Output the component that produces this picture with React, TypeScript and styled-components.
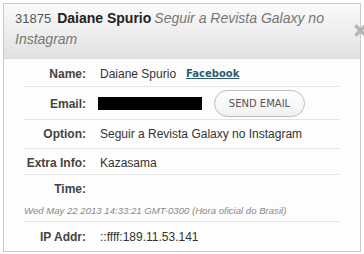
import React from 'react'
import styled, { createGlobalStyle } from 'styled-components'

const GlobalStyle = createGlobalStyle`
  html, body {
    margin: 0;
    padding: 0;
    background: #ffffff;
  }
  body {
    font-family: "Liberation Sans", Arial, sans-serif;
  }
`

const Page = styled.div`
  width: 364px;
  height: 254px;
  padding: 3px 0 0 3px;
  box-sizing: border-box;
  overflow: hidden;
`

const Panel = styled.div`
  position: relative;
  width: 358px;
  height: 249px;
  box-sizing: border-box;
  border: 1px solid #c9c9c9;
  background: #fdfdfd;
  display: flex;
  flex-direction: column;
`

const Header = styled.div`
  padding: 4px 20px 9px 11px;
  background: linear-gradient(to bottom, #fafafa 0%, #ececec 60%, #e1e1e1 100%);
  border-bottom: 1px solid #dedede;
  font-size: 14px;
  line-height: 20px;
  color: #444;
`

const LeadId = styled.span`
  font-size: 13px;
  color: #555;
  margin-right: 6px;
`

const LeadName = styled.span`
  font-weight: bold;
  color: #222;
  margin-right: 3px;
`

const LeadOption = styled.span`
  font-style: italic;
  color: #777;
`

const CloseButton = styled.button`
  position: absolute;
  top: 19px;
  right: -8px;
  width: 15px;
  height: 15px;
  padding: 0;
  border: 0;
  background: none;
  cursor: pointer;
`

const Body = styled.div`
  padding: 0 20px;
`

const Row = styled.div<{ $pad: string; $last?: boolean }>`
  display: grid;
  grid-template-columns: 62px 1fr;
  column-gap: 14px;
  align-items: center;
  padding: ${(p) => p.$pad};
  border-bottom: ${(p) => (p.$last ? 'none' : '1px solid #e4e4e4')};
`

const Label = styled.div`
  text-align: right;
  font-size: 12px;
  line-height: 14px;
  font-weight: bold;
  color: #444;
  white-space: nowrap;
`

const Value = styled.div`
  font-size: 12px;
  line-height: 14px;
  color: #333;
  display: flex;
  align-items: center;
  min-height: 14px;
`

const FacebookLink = styled.a`
  margin-left: 10px;
  font-family: "DejaVu Sans", Verdana, sans-serif;
  font-size: 10px;
  font-weight: bold;
  color: #2f5b70;
  text-decoration: underline;
`

const Redacted = styled.span`
  display: inline-block;
  width: 104px;
  height: 13px;
  margin-left: -2px;
  background: #000;
`

const SendButton = styled.button`
  margin-left: 12px;
  width: 91px;
  height: 27px;
  border: 1px solid #bdbdbd;
  border-radius: 14px;
  background: linear-gradient(to bottom, #ffffff, #f1f1f1);
  font-family: "DejaVu Sans", Verdana, sans-serif;
  font-size: 10px;
  color: #555;
  padding: 0;
  cursor: pointer;
`

const DateLine = styled.div`
  grid-column: 1 / -1;
  margin-top: 9px;
  font-size: 9.6px;
  line-height: 12px;
  font-style: italic;
  color: #888;
  white-space: nowrap;
`

export default function App() {
  return (
    <>
      <GlobalStyle />
      <Page>
        <Panel>
          <Header>
            <LeadId>31875</LeadId>
            <LeadName>Daiane Spurio</LeadName>
            <LeadOption>Seguir a Revista Galaxy no Instagram</LeadOption>
          </Header>
          <CloseButton aria-label="Fechar">
            <svg width="15" height="15" viewBox="0 0 15 15">
              <path
                d="M3.5 3.5 L11.5 11.5 M11.5 3.5 L3.5 11.5"
                stroke="#b5b5b5"
                strokeWidth="3.6"
                strokeLinecap="round"
              />
            </svg>
          </CloseButton>
          <Body>
            <Row $pad="8px 0 5px">
              <Label>Name:</Label>
              <Value>
                Daiane Spurio
                <FacebookLink href="#">Facebook</FacebookLink>
              </Value>
            </Row>
            <Row $pad="3px 0 2px">
              <Label>Email:</Label>
              <Value>
                <Redacted />
                <SendButton>SEND EMAIL</SendButton>
              </Value>
            </Row>
            <Row $pad="7px 0 7px">
              <Label>Option:</Label>
              <Value>Seguir a Revista Galaxy no Instagram</Value>
            </Row>
            <Row $pad="7px 0 4px">
              <Label>Extra Info:</Label>
              <Value>Kazasama</Value>
            </Row>
            <Row $pad="7px 0 4px">
              <Label>Time:</Label>
              <Value />
              <DateLine>Wed May 22 2013 14:33:21 GMT-0300 (Hora oficial do Brasil)</DateLine>
            </Row>
            <Row $pad="8px 0 8px" $last>
              <Label>IP Addr:</Label>
              <Value>::ffff:189.11.53.141</Value>
            </Row>
          </Body>
        </Panel>
      </Page>
    </>
  )
}
